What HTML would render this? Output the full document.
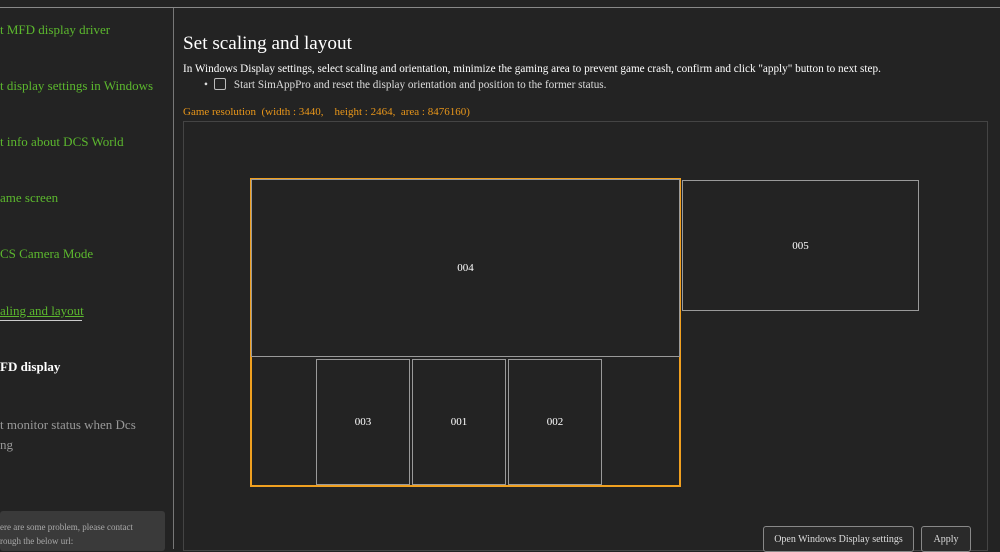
<!DOCTYPE html>
<html><head><style>
body{margin:0;width:1000px;height:549px;background:#232323;overflow:hidden;font-family:"Liberation Serif",serif;position:relative}
.a{position:absolute}
.nav{position:absolute;left:0;font-size:13px;color:#5cb82e;white-space:nowrap}
.m{position:absolute;border:1px solid #9a9a9a;color:#fff;font-size:11px;display:flex;align-items:center;justify-content:center;box-sizing:border-box}
.btn{position:absolute;border:1px solid #888;border-radius:3px;background:#2a2a2a;color:#ddd;font-size:10px;display:flex;align-items:center;justify-content:center;box-sizing:border-box}
</style></head><body>
<div class="a" style="left:0;top:7px;width:1000px;height:1px;background:#888"></div>
<div class="a" style="left:173px;top:8px;width:1px;height:541px;background:#777"></div>
<div class="nav" style="top:22px">t MFD display driver</div>
<div class="nav" style="top:78px">t display settings in Windows</div>
<div class="nav" style="top:134px">t info about DCS World</div>
<div class="nav" style="top:190px">ame screen</div>
<div class="nav" style="top:246px">CS Camera Mode</div>
<div class="nav" style="top:303px;text-decoration:underline">aling and layout</div>
<div class="a" style="left:0;top:320px;width:82px;height:1px;background:#ccc"></div>
<div class="nav" style="top:359px;color:#fff;font-weight:bold">FD display</div>
<div class="nav" style="top:415px;color:#999;line-height:20px">t monitor status when Dcs<br>ng</div>
<div class="a" style="left:0;top:511px;width:165px;height:40px;background:#3a3a3a;border-radius:3px;color:#aaa;font-size:9px;line-height:14px;padding-top:9px;box-sizing:border-box">ere are some problem, please contact<br>rough the below url:</div>

<div class="a" style="left:183px;top:33px;color:#fff;font-size:19.2px">Set scaling and layout</div>
<div class="a" style="left:183px;top:63px;color:#fff;font-size:11.2px;white-space:nowrap">In Windows Display settings, select scaling and orientation, minimize the gaming area to prevent game crash, confirm and click "apply" button to next step.</div>
<div class="a" style="left:204px;top:78px;color:#ddd;font-size:11.2px;white-space:nowrap">•&nbsp;&nbsp;<span style="display:inline-block;width:10px;height:10px;border:1px solid #bbb;border-radius:2px;vertical-align:-2px"></span>&nbsp;&nbsp;&nbsp;Start SimAppPro and reset the display orientation and position to the former status.</div>
<div class="a" style="left:183px;top:106px;color:#e8961a;font-size:11px;white-space:nowrap">Game resolution&nbsp;&nbsp;(width&nbsp;:&nbsp;3440,&nbsp;&nbsp;&nbsp;&nbsp;height&nbsp;:&nbsp;2464,&nbsp;&nbsp;area&nbsp;:&nbsp;8476160)</div>
<div class="a" style="left:183px;top:121px;width:805px;height:430px;border:1px solid #444;box-sizing:border-box"></div>
<div class="a" style="left:250px;top:178px;width:431px;height:309px;border:2px solid #f0a020;box-sizing:border-box"></div>
<div class="m" style="left:251px;top:179px;width:429px;height:178px">004</div>
<div class="m" style="left:682px;top:180px;width:237px;height:131px">005</div>
<div class="m" style="left:316px;top:359px;width:94px;height:126px">003</div>
<div class="m" style="left:412px;top:359px;width:94px;height:126px">001</div>
<div class="m" style="left:508px;top:359px;width:94px;height:126px">002</div>
<div class="btn" style="left:763px;top:526px;width:151px;height:26px">Open Windows Display settings</div>
<div class="btn" style="left:921px;top:526px;width:50px;height:26px">Apply</div>
</body></html>
